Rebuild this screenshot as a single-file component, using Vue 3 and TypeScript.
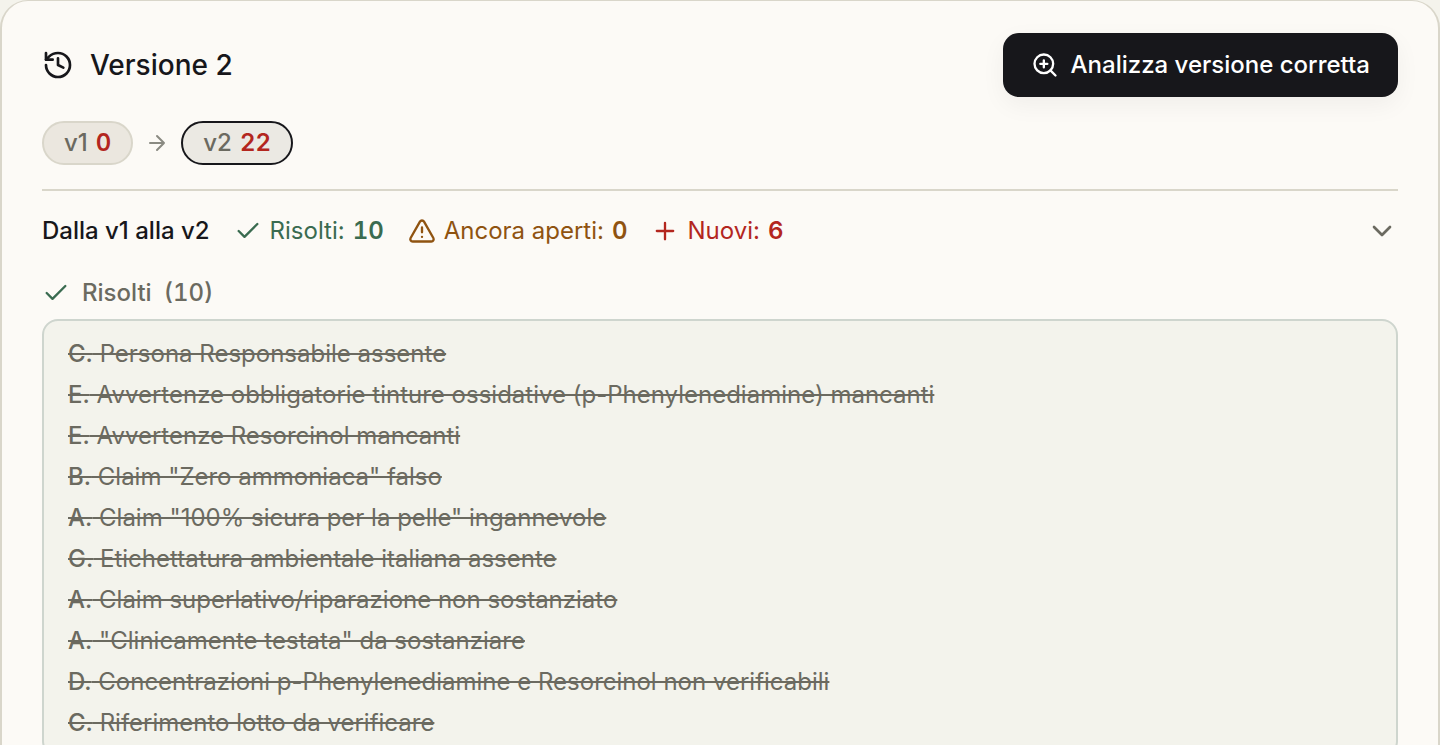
<script setup lang="ts">
import { ref } from 'vue'

interface Version {
  label: string
  count: number
}

interface Issue {
  section: string
  title: string
}

const versions: Version[] = [
  { label: 'v1', count: 0 },
  { label: 'v2', count: 22 },
]
const current = ref<string>('v2')
const open = ref<boolean>(true)

const resolved: Issue[] = [
  { section: 'C', title: 'Persona Responsabile assente' },
  { section: 'E', title: 'Avvertenze obbligatorie tinture ossidative (p-Phenylenediamine) mancanti' },
  { section: 'E', title: 'Avvertenze Resorcinol mancanti' },
  { section: 'B', title: 'Claim "Zero ammoniaca" falso' },
  { section: 'A', title: 'Claim "100% sicura per la pelle" ingannevole' },
  { section: 'G', title: 'Etichettatura ambientale italiana assente' },
  { section: 'A', title: 'Claim superlativo/riparazione non sostanziato' },
  { section: 'A', title: '"Clinicamente testata" da sostanziare' },
  { section: 'D', title: 'Concentrazioni p-Phenylenediamine e Resorcinol non verificabili' },
  { section: 'C', title: 'Riferimento lotto da verificare' },
]
</script>

<template>
  <main class="page">
    <section class="card">
      <header class="head">
        <h1 class="title">
          <svg class="icon-xl" viewBox="0 0 24 24" aria-hidden="true">
            <path d="M3 12a9 9 0 1 0 9-9 9.75 9.75 0 0 0-6.74 2.74L3 8" />
            <path d="M3 3v5h5" />
            <path d="M12 7v5l4 2" />
          </svg>
          <span>Versione 2</span>
        </h1>
        <button type="button" class="primary">
          <svg class="icon-lg" viewBox="0 0 24 24" aria-hidden="true">
            <circle cx="11" cy="11" r="8" />
            <path d="M21 21l-4.35-4.35M11 8v6M8 11h6" />
          </svg>
          <span>Analizza versione corretta</span>
        </button>
      </header>

      <nav class="versions" aria-label="Versioni">
        <template v-for="(v, i) in versions" :key="v.label">
          <svg v-if="i > 0" class="icon-sm arrow" viewBox="0 0 24 24" aria-hidden="true">
            <path d="M5 12h14M12 5l7 7-7 7" />
          </svg>
          <button
            type="button"
            class="pill"
            :class="{ active: v.label === current }"
            @click="current = v.label"
          >
            <span>{{ v.label }}</span>
            <b>{{ v.count }}</b>
          </button>
        </template>
      </nav>

      <div class="compare">
        <button type="button" class="summary" :aria-expanded="open" @click="open = !open">
          <span class="range">Dalla v1 alla v2</span>
          <span class="stat green">
            <svg class="icon-lg" viewBox="0 0 24 24" aria-hidden="true"><path d="M20 6L9 17l-5-5" /></svg>
            <span>Risolti:</span>
            <b>10</b>
          </span>
          <span class="stat amber">
            <svg class="icon-lg" viewBox="0 0 24 24" aria-hidden="true">
              <path d="M21.73 18l-8-14a2 2 0 0 0-3.48 0l-8 14A2 2 0 0 0 4 21h16a2 2 0 0 0 1.73-3" />
              <path d="M12 9v4M12 17h.01" />
            </svg>
            <span>Ancora aperti:</span>
            <b>0</b>
          </span>
          <span class="stat red">
            <svg class="icon-lg" viewBox="0 0 24 24" aria-hidden="true"><path d="M5 12h14M12 5v14" /></svg>
            <span>Nuovi:</span>
            <b>6</b>
          </span>
          <svg class="icon-xl chevron" viewBox="0 0 24 24" aria-hidden="true"><path d="M6 9l6 6 6-6" /></svg>
        </button>

        <div v-if="open" class="group">
          <h2 class="group-title">
            <svg class="icon-lg green" viewBox="0 0 24 24" aria-hidden="true"><path d="M20 6L9 17l-5-5" /></svg>
            <span>Risolti</span>
            <span class="count">({{ resolved.length }})</span>
          </h2>
          <ul class="issues">
            <li v-for="(item, i) in resolved" :key="i">
              <span class="section">{{ item.section }}.</span> {{ item.title }}
            </li>
          </ul>
        </div>
      </div>
    </section>
  </main>
</template>

<style>
html,
body {
  background: #f4f3ec;
}
</style>

<style scoped>
.page {
  height: 100vh;
  overflow: hidden;
  font-family: Inter, "Liberation Sans", sans-serif;
  font-size: 24px;
  line-height: 32px;
  color: #17171b;
}

.card {
  box-sizing: border-box;
  padding: 32px 40px;
  border: 2px solid #d9d6ca;
  border-top-width: 1px;
  border-radius: 28px;
  background: #fcfaf6;
}

button {
  font: inherit;
  cursor: pointer;
}

svg {
  flex: none;
  fill: none;
  stroke: currentColor;
  stroke-width: 2;
  stroke-linecap: round;
  stroke-linejoin: round;
}

.icon-sm { width: 24px; height: 24px; }
.icon-lg { width: 28px; height: 28px; }
.icon-xl { width: 32px; height: 32px; }

.head {
  display: flex;
  align-items: center;
  justify-content: space-between;
}

.title {
  display: flex;
  align-items: center;
  gap: 16px;
  margin: 0;
  font-size: 28px;
  font-weight: 500;
}

.primary {
  display: flex;
  align-items: center;
  gap: 12px;
  padding: 16px 28px;
  border: 0;
  border-radius: 16px;
  background: #17171b;
  color: #fff;
  font-weight: 500;
  box-shadow: 0 8px 24px rgba(24, 24, 27, 0.05);
}

.versions {
  display: flex;
  align-items: center;
  gap: 12px;
  margin-top: 24px;
}

.pill {
  display: flex;
  align-items: center;
  gap: 8px;
  padding: 4px 20px;
  border: 2px solid #d9d6ca;
  border-radius: 22px;
  background: #ebe7df;
  color: #6b6a60;
  font-weight: 500;
}

.pill.active {
  border-color: #17171b;
  background: #ebe9e3;
}

.pill b {
  color: #b3261e;
}

.arrow {
  color: #8a8a82;
}

b {
  font-weight: 600;
  font-variant-numeric: tabular-nums;
}

.compare {
  margin-top: 24px;
  border-top: 2px solid #d9d6ca;
}

.summary {
  display: flex;
  align-items: center;
  gap: 24px;
  width: 100%;
  padding: 24px 0;
  border: 0;
  background: none;
  color: inherit;
  text-align: left;
}

.range {
  font-weight: 500;
}

.stat {
  display: flex;
  align-items: center;
  gap: 8px;
}

.green { color: #3a6b50; }
.amber { color: #8f5310; }
.red { color: #b3261e; }

.chevron {
  margin-left: auto;
  color: #6b6a60;
}

.group-title {
  display: flex;
  align-items: center;
  gap: 12px;
  margin: 6px 0 10px;
  color: #6b6a60;
  font-size: 24px;
  font-weight: 500;
}

.group-title .green {
  color: #3a6b50;
}

.count {
  font-variant-numeric: tabular-nums;
}

.issues {
  display: flex;
  flex-direction: column;
  gap: 8px;
  margin: 0;
  padding: 16px 24px;
  border: 2px solid #ced5ce;
  border-radius: 16px;
  background: #f3f3ec;
  color: #6b6a60;
  line-height: 33px;
  list-style: none;
}

.issues li {
  text-decoration: line-through 2px;
}

.section {
  font-weight: 500;
}
</style>
